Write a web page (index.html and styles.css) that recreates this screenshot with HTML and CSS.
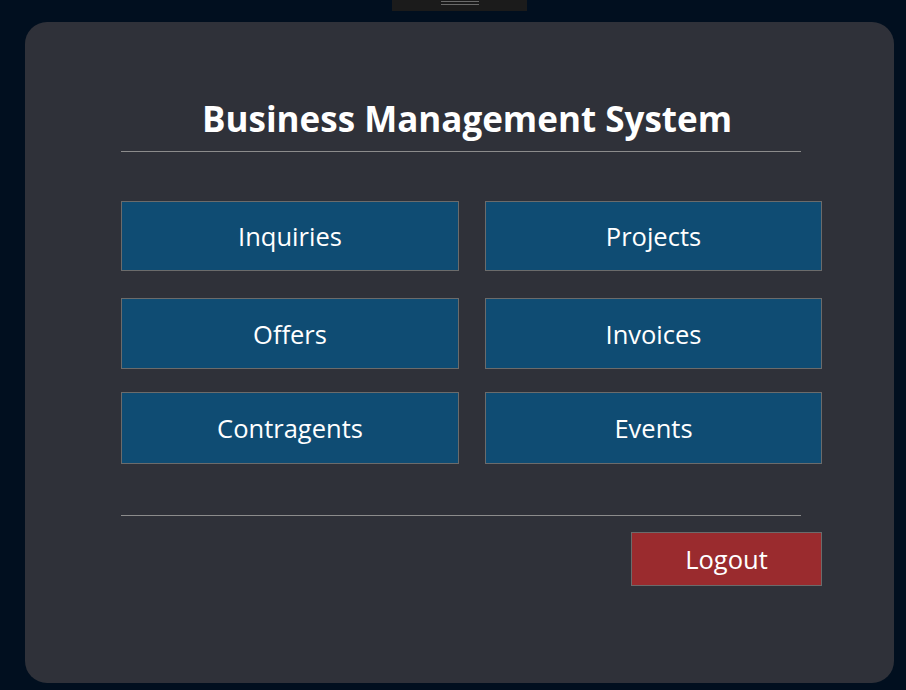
FILE: index.html
```html
<!DOCTYPE html>
<html>
<head>
<meta charset="utf-8">
<link rel="stylesheet" href="styles.css">
</head>
<body>
<div class="handle"><span class="grip"></span></div>
<main class="card">
  <div class="content">
    <h1 class="title">Business Management System</h1>
    <hr class="rule">
    <nav class="grid">
      <a class="tile r1">Inquiries</a>
      <a class="tile r1">Projects</a>
      <a class="tile r2">Offers</a>
      <a class="tile r2">Invoices</a>
      <a class="tile r3">Contragents</a>
      <a class="tile r3">Events</a>
    </nav>
    <hr class="rule rule-bottom">
    <div class="actions">
      <button class="logout">Logout</button>
    </div>
  </div>
</main>
</body>
</html>
```
FILE: styles.css
```css
html, body {
  margin: 0;
  padding: 0;
}
body {
  background: #010f1f;
  font-family: "Open Sans", "Noto Sans", sans-serif;
  color: #fff;
  width: 906px;
  height: 690px;
  overflow: hidden;
  position: relative;
}
.handle {
  position: absolute;
  top: 0;
  left: 392px;
  width: 135px;
  height: 11px;
  background: #1b1b1b;
}
.grip {
  position: absolute;
  left: 49px;
  top: 1px;
  width: 38px;
  height: 2px;
  border-top: 1px solid #6a6a6a;
  border-bottom: 1px solid #6a6a6a;
}
.card {
  margin: 22px 12px 0 25px;
  height: 661px;
  background: #2f3139;
  border-radius: 22px;
  box-sizing: border-box;
  padding: 0 0 0 96px;
}
.content {
  width: 701px;
  padding-top: 74px;
}
.title {
  margin: 0;
  font-size: 35px;
  font-weight: 700;
  text-align: center;
  line-height: 46px;
  padding-right: 9px;
}
.rule {
  width: 680px;
  margin: 9px 0 0 0;
  border: 0;
  height: 1px;
  background: #8c8c8c;
}
.grid {
  margin-top: 49px;
  display: grid;
  grid-template-columns: 338px 337px;
  column-gap: 26px;
  grid-template-rows: 70px 27px 71px 23px 72px;
}
.tile {
  box-sizing: border-box;
  background: #0f4c73;
  border: 1px solid #6b6b6b;
  display: flex;
  align-items: center;
  justify-content: center;
  font-size: 25.5px;
  color: #fff;
}
.r1 { grid-row: 1; }
.r2 { grid-row: 3; }
.r3 { grid-row: 5; }
.rule-bottom {
  margin-top: 51px;
}
.actions {
  display: flex;
  justify-content: flex-end;
  margin-top: 16px;
}
.logout {
  width: 191px;
  height: 54px;
  background: #9a2b2e;
  border: 1px solid #6b6b6b;
  color: #fff;
  font-family: inherit;
  font-size: 25.5px;
  padding: 0;
}
```
